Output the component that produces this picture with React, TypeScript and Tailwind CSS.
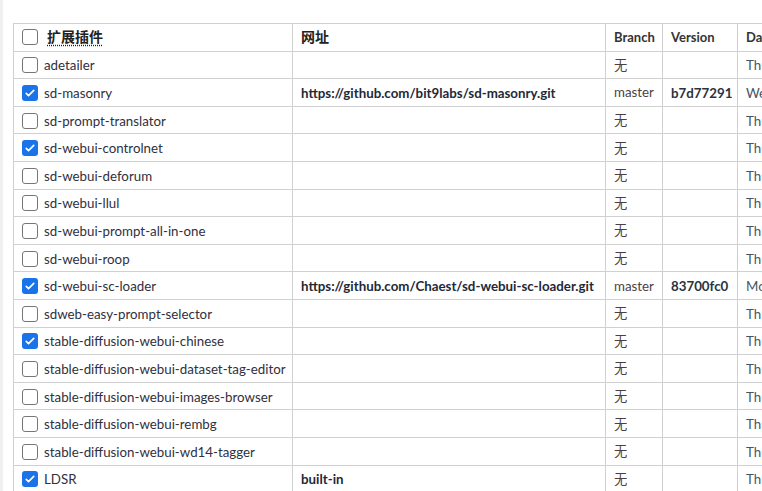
import React from "react";

type Row = {
  name: string;
  checked: boolean;
  url?: string;
  branch?: string;
  version?: string;
  date: string;
};

const rows: Row[] = [
  { name: "adetailer", checked: false, date: "Thu" },
  { name: "sd-masonry", checked: true, url: "https://github.com/bit9labs/sd-masonry.git", branch: "master", version: "b7d77291", date: "We" },
  { name: "sd-prompt-translator", checked: false, date: "Thu" },
  { name: "sd-webui-controlnet", checked: true, date: "Thu" },
  { name: "sd-webui-deforum", checked: false, date: "Thu" },
  { name: "sd-webui-llul", checked: false, date: "Thu" },
  { name: "sd-webui-prompt-all-in-one", checked: false, date: "Thu" },
  { name: "sd-webui-roop", checked: false, date: "Thu" },
  { name: "sd-webui-sc-loader", checked: true, url: "https://github.com/Chaest/sd-webui-sc-loader.git", branch: "master", version: "83700fc0", date: "Mo" },
  { name: "sdweb-easy-prompt-selector", checked: false, date: "Thu" },
  { name: "stable-diffusion-webui-chinese", checked: true, date: "Thu" },
  { name: "stable-diffusion-webui-dataset-tag-editor", checked: false, date: "Thu" },
  { name: "stable-diffusion-webui-images-browser", checked: false, date: "Thu" },
  { name: "stable-diffusion-webui-rembg", checked: false, date: "Thu" },
  { name: "stable-diffusion-webui-wd14-tagger", checked: false, date: "Thu" },
  { name: "LDSR", checked: true, url: "built-in", date: "Thu" },
];

const font = { fontFamily: "Lato, 'Noto Sans CJK SC', sans-serif" };

function Box({ checked }: { checked: boolean }) {
  return checked ? (
    <span className="inline-flex w-4 h-4 rounded-[3px] bg-[#1a73e8] items-center justify-center shrink-0">
      <svg viewBox="0 0 16 16" className="w-3 h-3" fill="none">
        <path d="M3 8.5l3 3 7-7" stroke="white" strokeWidth="2.2" strokeLinecap="round" strokeLinejoin="round" />
      </svg>
    </span>
  ) : (
    <span className="inline-block w-4 h-4 rounded-[3px] border border-[#767676] bg-white shrink-0" />
  );
}

export default function App() {
  const td = "border border-[#d0d0d0] px-2 h-[27.6px] align-middle whitespace-nowrap overflow-hidden";
  return (
    <div className="w-[762px] h-[491px] overflow-hidden bg-white flex" style={font}>
      <div className="w-[3px] bg-[#f0f0f0] shrink-0" />
      <div className="pl-[10px] pt-[23px]">
        <table className="border-collapse text-[13.3px] leading-[18px] text-[#2f3040] w-[1000px] table-fixed">
          <colgroup>
            <col className="w-[279px]" />
            <col className="w-[313px]" />
            <col className="w-[57px]" />
            <col className="w-[75px]" />
            <col className="w-[276px]" />
          </colgroup>
          <thead>
            <tr>
              <th className={`${td} text-left font-bold text-[#222] text-[14px]`}>
                <div className="flex items-center gap-[9px]">
                  <Box checked={false} />
                  <span className="underline decoration-dotted underline-offset-[3px]">扩展插件</span>
                </div>
              </th>
              <th className={`${td} text-left font-bold text-[#222] text-[14px]`}>网址</th>
              <th className={`${td} text-left font-bold text-[#333] text-[13px]`}>Branch</th>
              <th className={`${td} text-left font-bold text-[#333] text-[13px]`}>Version</th>
              <th className={`${td} text-left font-bold text-[#333] text-[13px]`}>Date</th>
            </tr>
          </thead>
          <tbody>
            {rows.map((r) => (
              <tr key={r.name}>
                <td className={td}>
                  <div className="flex items-center gap-[6px] pt-px">
                    <Box checked={r.checked} />
                    <span>{r.name}</span>
                  </div>
                </td>
                <td className={`${td} pt-px font-bold text-[#1f2937]`}>{r.url ?? ""}</td>
                <td className={`${td} text-[#4b3f44]`}>{r.branch ?? "无"}</td>
                <td className={`${td} pt-px font-bold text-[#2a3340]`}>{r.version ?? ""}</td>
                <td className={`${td} pt-px text-[#445566]`}>{r.date}</td>
              </tr>
            ))}
          </tbody>
        </table>
      </div>
    </div>
  );
}
